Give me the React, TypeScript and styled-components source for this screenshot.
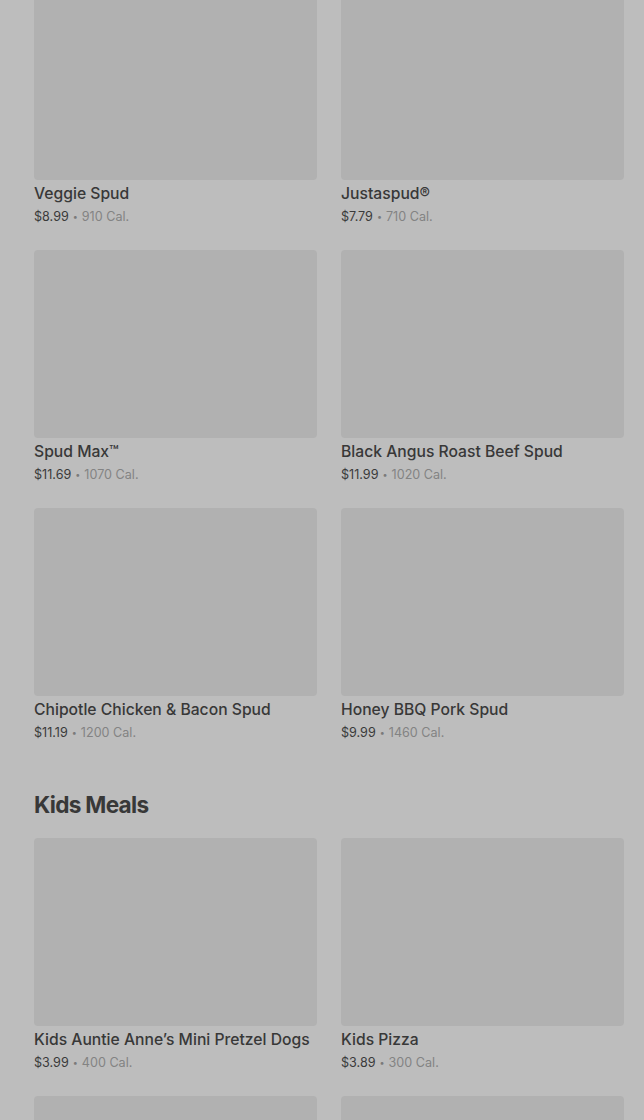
import React from 'react';
import styled, { createGlobalStyle } from 'styled-components';

const GlobalStyle = createGlobalStyle`
  html, body {
    margin: 0;
    padding: 0;
    background: #bdbdbd;
    font-family: Inter, "Liberation Sans", sans-serif;
    overflow: hidden;
  }
`;

const Page = styled.main`
  width: 644px;
  height: 1120px;
  overflow: hidden;
  background: #bdbdbd;
`;

const Content = styled.div`
  margin-top: -8px;
  padding: 0 20px 0 34px;
`;

const Section = styled.section`
  margin-bottom: 47px;
`;

const SectionTitle = styled.h2`
  margin: 0 0 18px;
  font-size: 22.6px;
  line-height: 30px;
  font-weight: 700;
  letter-spacing: -0.7px;
  color: #383838;
`;

const Grid = styled.div`
  display: grid;
  grid-template-columns: 283px 283px;
  column-gap: 24px;
  row-gap: 23px;
`;

const Card = styled.div`
  display: flex;
  flex-direction: column;
`;

const Thumb = styled.div`
  height: 188px;
  border-radius: 4px;
  background: #b1b1b1;
`;

const Name = styled.div`
  margin-top: 4px;
  font-size: 15.7px;
  line-height: 20px;
  font-weight: 500;
  color: #383838;
  white-space: nowrap;
`;

const Meta = styled.div`
  margin-top: 3px;
  font-size: 12.6px;
  line-height: 20px;
  color: #3a3a3a;
`;

const Dot = styled.span`
  font-size: 9px;
  color: #7a7a7a;
  margin: 0 4px;
  vertical-align: 1px;
`;

const Cal = styled.span`
  color: #838383;
`;

type Item = { name: string; price: string; cal: string };

const spuds: Item[] = [
  { name: 'Veggie Spud', price: '$8.99', cal: '910 Cal.' },
  { name: 'Justaspud®', price: '$7.79', cal: '710 Cal.' },
  { name: 'Spud Max™', price: '$11.69', cal: '1070 Cal.' },
  { name: 'Black Angus Roast Beef Spud', price: '$11.99', cal: '1020 Cal.' },
  { name: 'Chipotle Chicken & Bacon Spud', price: '$11.19', cal: '1200 Cal.' },
  { name: 'Honey BBQ Pork Spud', price: '$9.99', cal: '1460 Cal.' },
];

const kids: Item[] = [
  { name: 'Kids Auntie Anne’s Mini Pretzel Dogs', price: '$3.99', cal: '400 Cal.' },
  { name: 'Kids Pizza', price: '$3.89', cal: '300 Cal.' },
  { name: '', price: '', cal: '' },
  { name: '', price: '', cal: '' },
];

const ItemCard = ({ item }: { item: Item }) => (
  <Card>
    <Thumb />
    {item.name && <Name>{item.name}</Name>}
    {item.price && (
      <Meta>
        {item.price}
        <Dot>•</Dot>
        <Cal>{item.cal}</Cal>
      </Meta>
    )}
  </Card>
);

const App = () => {
  return (
    <>
      <GlobalStyle />
      <Page>
        <Content>
          <Section>
            <Grid>
              {spuds.map((s) => (
                <ItemCard key={s.name} item={s} />
              ))}
            </Grid>
          </Section>
          <Section>
            <SectionTitle>Kids Meals</SectionTitle>
            <Grid>
              {kids.map((s, i) => (
                <ItemCard key={i} item={s} />
              ))}
            </Grid>
          </Section>
        </Content>
      </Page>
    </>
  );
};

export default App;
